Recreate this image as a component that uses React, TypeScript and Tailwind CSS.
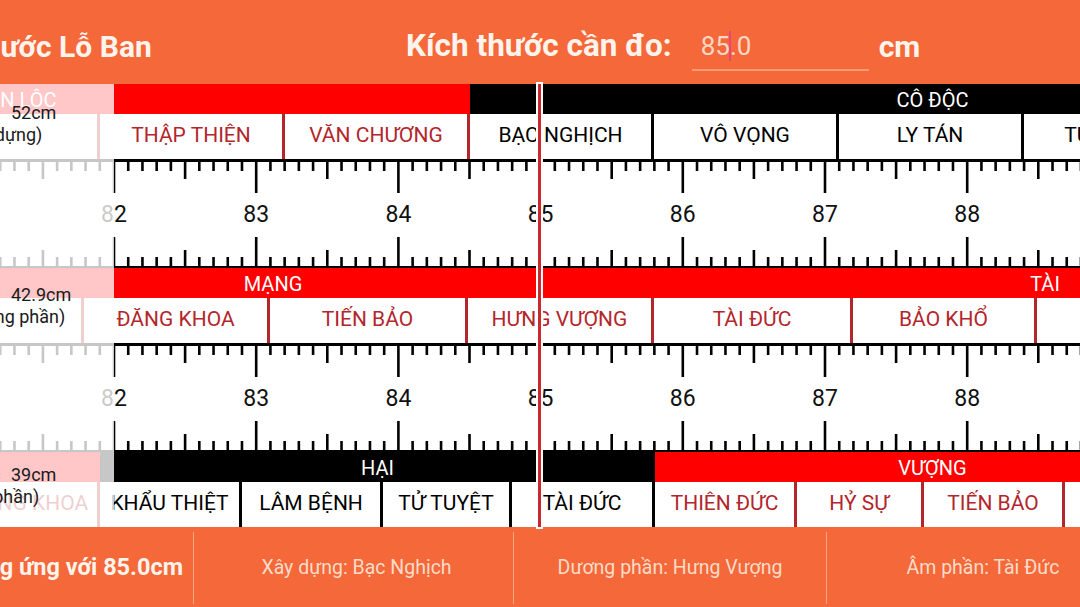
import clsx from "clsx";

type Seg = { s: number; e: number; t: string; k: "r" | "b" };

// positions are page x in px (the view is scrolled, so some start < 0)
const R1_BAND: Seg[] = [
  { s: -455, e: 470, t: "NHÂN LỘC", k: "r" },
  { s: 470, e: 1395, t: "CÔ ĐỘC", k: "b" },
];
const R1_CELLS: Seg[] = [
  { s: -85, e: 100, t: "", k: "r" },
  { s: 100, e: 285, t: "THẬP THIỆN", k: "r" },
  { s: 285, e: 470, t: "VĂN CHƯƠNG", k: "r" },
  { s: 470, e: 654, t: "BẠC NGHỊCH", k: "b" },
  { s: 654, e: 839, t: "VÔ VỌNG", k: "b" },
  { s: 839, e: 1024, t: "LY TÁN", k: "b" },
  { s: 1024, e: 1209, t: "TỬU THỰC", k: "b" },
];
const R2_BAND: Seg[] = [
  { s: -108, e: 654, t: "MẠNG", k: "r" },
  { s: 654, e: 1436, t: "TÀI", k: "r" },
];
const R2_CELLS: Seg[] = [
  { s: -108, e: 84, t: "", k: "r" },
  { s: 84, e: 270, t: "ĐĂNG KHOA", k: "r" },
  { s: 270, e: 468, t: "TIẾN BẢO", k: "r" },
  { s: 468, e: 654, t: "HƯNG VƯỢNG", k: "r" },
  { s: 654, e: 853, t: "TÀI ĐỨC", k: "r" },
  { s: 853, e: 1037, t: "BẢO KHỔ", k: "r" },
  { s: 1037, e: 1229, t: "NHẬN LỘC", k: "r" },
];
const R3_BAND: Seg[] = [
  { s: -455, e: 100, t: "ĐINH", k: "r" },
  { s: 100, e: 655, t: "HẠI", k: "b" },
  { s: 655, e: 1210, t: "VƯỢNG", k: "r" },
];
const R3_CELLS: Seg[] = [
  { s: -39, e: 100, t: "ĐĂNG KHOA", k: "r" },
  { s: 100, e: 242, t: "KHẨU THIỆT", k: "b" },
  { s: 242, e: 383, t: "LÂM BỆNH", k: "b" },
  { s: 383, e: 512, t: "TỬ TUYỆT", k: "b" },
  { s: 512, e: 655, t: "TÀI ĐỨC", k: "b" },
  { s: 655, e: 797, t: "THIÊN ĐỨC", k: "r" },
  { s: 797, e: 924, t: "HỶ SỰ", k: "r" },
  { s: 924, e: 1065, t: "TIẾN BẢO", k: "r" },
  { s: 1065, e: 1204, t: "NẠP PHÚC", k: "r" },
];

const X0 = 114; // x of 82cm
const PX = 142.2; // px per cm

function Band({ segs }: { segs: Seg[] }) {
  return (
    <div className="flex h-[30px] overflow-hidden">
      {segs.map((g, i) => (
        <div
          key={i}
          className={clsx(
            "shrink-0 flex items-center justify-center text-[20px] leading-none text-white pt-[1px]",
            g.k === "r" ? "bg-[#ff0000]" : "bg-black"
          )}
          style={{ width: g.e - g.s, marginLeft: i === 0 ? g.s : 0 }}
        >
          {g.t}
        </div>
      ))}
    </div>
  );
}

function Cells({ segs }: { segs: Seg[] }) {
  return (
    <div className="flex h-[45px] overflow-hidden bg-white">
      {segs.map((g, i) => (
        <div
          key={i}
          className={clsx(
            "shrink-0 flex items-center justify-center pb-[3px] text-[21px] leading-none whitespace-nowrap border-r-[3px]",
            g.k === "r" ? "text-[#b3262c] border-[#b3262c]" : "text-black border-black"
          )}
          style={{ width: g.e - g.s, marginLeft: i === 0 ? g.s : 0 }}
        >
          {g.t}
        </div>
      ))}
    </div>
  );
}

function Scale() {
  const lines = [];
  for (let mm = 805; mm <= 900; mm++) {
    const x = X0 + ((mm - 820) * PX) / 10;
    if (x < -5 || x > 1085) continue;
    const top = mm % 10 === 0 ? 34 : mm % 5 === 0 ? 20 : 12;
    const bot = mm % 10 === 0 ? 31 : mm % 5 === 0 ? 18 : 11;
    lines.push(<line key={"t" + mm} x1={x} x2={x} y1={0} y2={top} stroke="#000" strokeWidth={2.6} />);
    lines.push(<line key={"b" + mm} x1={x} x2={x} y1={109} y2={109 - bot} stroke="#000" strokeWidth={2.6} />);
  }
  const nums = [81, 82, 83, 84, 85, 86, 87, 88, 89];
  return (
    <svg width={1080} height={109} className="block bg-white">
      <line x1={0} x2={1080} y1={1.5} y2={1.5} stroke="#000" strokeWidth={3} />
      <line x1={0} x2={1080} y1={108} y2={108} stroke="#000" strokeWidth={2} />
      {lines}
      {nums.map((n) => (
        <text
          key={n}
          x={X0 + (n - 82) * PX}
          y={55}
          textAnchor="middle"
          dominantBaseline="central"
          fontSize={23}
          fontFamily="Roboto, 'Noto Sans', sans-serif"
          fill="#111"
        >
          {n}
        </text>
      ))}
    </svg>
  );
}

function Label({ top, size, kind }: { top: number; size: string; kind: string }) {
  return (
    <div className="absolute left-[-51px] z-10 text-[18px] leading-[22px] text-[#1a1a1a] whitespace-nowrap" style={{ top }}>
      <div>
        Thước <span className="ml-[6px]">{size}</span>
      </div>
      <div className="ml-[8px]">{kind}</div>
    </div>
  );
}

export default function App() {
  return (
    <div className="relative w-[1080px] h-[607px] overflow-hidden bg-white font-['Roboto','Noto_Sans',sans-serif]">
      {/* header */}
      <div className="flex items-center h-[84px] bg-[#f4683a] pt-[8px] text-[30px] font-bold text-[#fff4ec] whitespace-nowrap">
        <div className="ml-[-35px] w-[441px] shrink-0">Thước Lỗ Ban</div>
        <div className="shrink-0 text-[31.5px]">Kích thước cần đo:</div>
        <div className="ml-[20px] w-[177px] h-[50px] shrink-0 flex items-center border-b-[2px] border-[#f89a72] pl-[9px] pt-[2px] text-[26px] font-normal text-[#fcd8c4]">
          85<span className="w-[2px] h-[30px] bg-[#e5457c] mx-[-1px]" />.0
        </div>
        <div className="ml-[10px] shrink-0">cm</div>
      </div>

      {/* rulers */}
      <div className="relative">
        <Band segs={R1_BAND} />
        <Cells segs={R1_CELLS} />
        <Scale />
        <Band segs={R2_BAND} />
        <Cells segs={R2_CELLS} />
        <Scale />
        <Band segs={R3_BAND} />
        <Cells segs={R3_CELLS} />

        {/* scrolled-out area fade */}
        <div className="absolute left-0 top-0 bottom-0 w-[114px] bg-white/[0.78]" />
        <Label top={18} size="52cm" kind="(xây dựng)" />
        <Label top={200} size="42.9cm" kind="(dương phần)" />
        <Label top={380} size="39cm" kind="(âm phần)" />

        {/* needle */}
        <div className="absolute top-0 bottom-0 left-[538px] w-[3px] z-20 bg-[#c9282e] shadow-[0_0_0_2px_#ffffff]" />
      </div>

      {/* footer */}
      <div className="flex h-[80px] bg-[#f4683a] pt-[5px] pb-[3px] whitespace-nowrap">
        <div className="w-[193px] shrink-0 flex items-center justify-end pr-[10px] text-[23.5px] font-bold text-[#fff4ec]">
          Tương ứng với 85.0cm
        </div>
        <div className="w-[320px] shrink-0 flex items-center justify-center pl-[6px] border-l border-[#f8a683] text-[19.5px] text-[#fcdcc8]">
          Xây dựng: Bạc Nghịch
        </div>
        <div className="w-[313px] shrink-0 flex items-center justify-center border-l border-[#f8a683] text-[19.5px] text-[#fcdcc8]">
          Dương phần: Hưng Vượng
        </div>
        <div className="w-[313px] shrink-0 flex items-center justify-center border-l border-[#f8a683] text-[19.5px] text-[#fcdcc8]">
          Âm phần: Tài Đức
        </div>
      </div>
    </div>
  );
}
